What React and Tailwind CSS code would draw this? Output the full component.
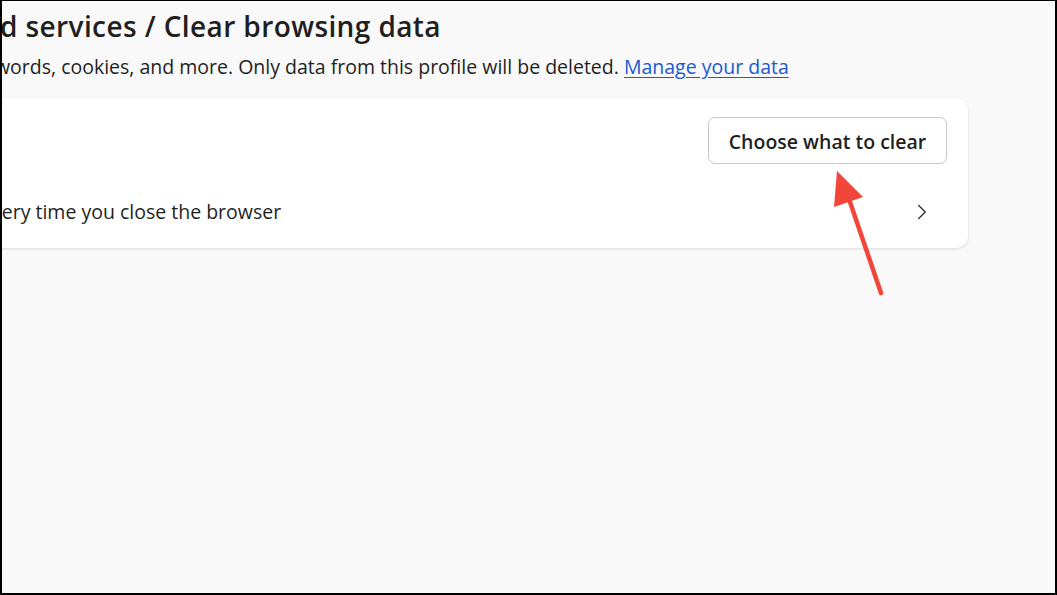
import { ChevronRight } from 'lucide-react';

// Clear browsing data section, clipped on the left like the source capture
export default function App() {
    return (
        <div className="relative h-[595px] w-[1057px] overflow-hidden bg-[#f9f9f9] border-t border-l-2 border-r-2 border-b-2 border-black font-['Open_Sans',sans-serif] text-[#1f1f1f]">
            <div className="flex flex-col pt-[8px] pr-[87px]">
                <h1 className="-ml-[2px] text-[28px] leading-[34px] font-semibold tracking-[0.4px] whitespace-nowrap">d services / Clear browsing data</h1>
                <p className="mt-[11px] -ml-[7px] text-[19.5px] leading-[26px] whitespace-nowrap">
                    words, cookies, and more. Only data from this profile will be deleted.{' '}
                    <a href="#" className="text-[#1a5ad0] underline underline-offset-[3px]">Manage your data</a>
                </p>

                <div className="mt-[18px] -ml-[20px] flex flex-col rounded-[12px] bg-white shadow-[0_1px_3px_rgba(0,0,0,0.12)]">
                    <div className="flex h-[83px] items-center justify-end pr-[21px] pt-[2px]">
                        <button className="h-[47px] w-[239px] rounded-[7px] border border-[#c7c7c7] bg-white pt-[2px] text-[19.5px] font-semibold text-[#1f1f1f]">
                            Choose what to clear
                        </button>
                    </div>
                    <div className="flex h-[67px] items-center justify-between pl-[13px] pr-[33px] pb-[6px]">
                        <span className="-ml-[3px] text-[19.5px] whitespace-nowrap">very time you close the browser</span>
                        <ChevronRight className="h-[26px] w-[26px] text-[#3c3c3c]" strokeWidth={1.4} />
                    </div>
                </div>
            </div>

            <svg className="pointer-events-none absolute left-0 top-0" width="1057" height="595" viewBox="0 0 1057 595">
                <line x1="879" y1="292" x2="847" y2="198" stroke="#f2463a" strokeWidth="4.5" strokeLinecap="round" />
                <polygon points="835,170 832,206 861,196" fill="#f2463a" />
            </svg>
        </div>
    );
}
